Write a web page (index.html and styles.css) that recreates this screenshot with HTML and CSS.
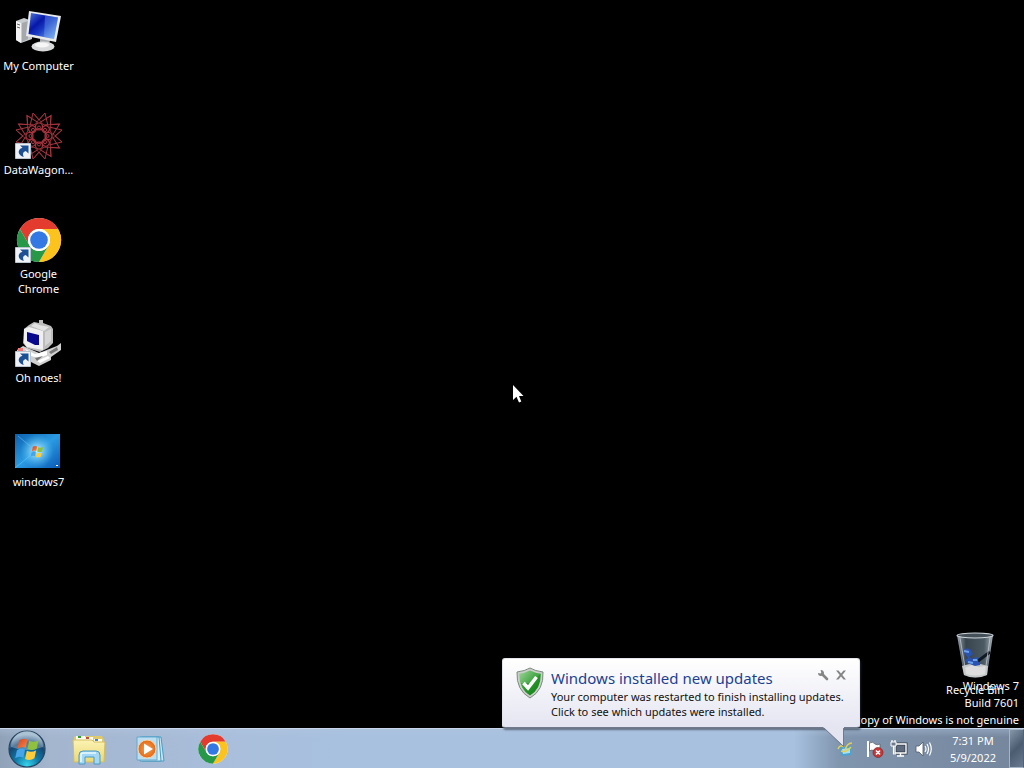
FILE: index.html
```html
<!DOCTYPE html>
<html lang="en">
<head>
<meta charset="utf-8">
<title>Desktop</title>
<link rel="stylesheet" href="styles.css">
</head>
<body>
<svg class="defs" aria-hidden="true">
  <defs>
    <linearGradient id="screen" x1="0" y1="0" x2="1" y2="1"><stop offset="0" stop-color="#4f78dc"/><stop offset=".35" stop-color="#0617a8"/><stop offset=".55" stop-color="#1a3cc4"/><stop offset="1" stop-color="#8fc4fa"/></linearGradient>
    <linearGradient id="wall" x1="0" y1="0" x2="1" y2="1"><stop offset="0" stop-color="#0b5fae"/><stop offset=".5" stop-color="#2b9be2"/><stop offset="1" stop-color="#0a58b4"/></linearGradient>
    <radialGradient id="glow"><stop offset="0" stop-color="#c8f4ff"/><stop offset="1" stop-color="#4fc0f4" stop-opacity="0"/></radialGradient>
    <radialGradient id="orb" cx=".5" cy=".95" r=".85"><stop offset="0" stop-color="#38d4ec"/><stop offset=".4" stop-color="#0f7aa8"/><stop offset=".75" stop-color="#174672"/><stop offset="1" stop-color="#8ba9c4"/></radialGradient>
    <linearGradient id="shield" x1="0" y1="0" x2="1" y2="1"><stop offset="0" stop-color="#8fd08a"/><stop offset=".45" stop-color="#2f9c2f"/><stop offset="1" stop-color="#0c7a12"/></linearGradient>
    <linearGradient id="folder" x1="0" y1="0" x2="0" y2="1"><stop offset="0" stop-color="#fbf3b4"/><stop offset="1" stop-color="#ecd873"/></linearGradient>
    <linearGradient id="bin" x1="0" y1="0" x2="1" y2="0"><stop offset="0" stop-color="#9aa6ae"/><stop offset=".25" stop-color="#38444e"/><stop offset=".75" stop-color="#4c5a64"/><stop offset="1" stop-color="#a6b0b6"/></linearGradient>
    <radialGradient id="orange"><stop offset="0" stop-color="#f9a04c"/><stop offset="1" stop-color="#e36a17"/></radialGradient>
    <linearGradient id="flagRed" x1="0" y1="0" x2="1" y2="1"><stop offset="0" stop-color="#d8401c"/><stop offset="1" stop-color="#f58a4a"/></linearGradient>
    <symbol id="chrome" viewBox="0 0 48 48">
      <circle cx="24" cy="24" r="22" fill="#fff"/>
      <path d="M4.9 13A22 22 0 0 1 43.1 13H24A11 11 0 0 0 14.5 29.5Z" fill="#e33b2e"/>
      <path d="M43.1 13A22 22 0 0 1 24 46L33.5 29.5A11 11 0 0 0 24 13Z" fill="#fcc31e"/>
      <path d="M24 46A22 22 0 0 1 4.9 13L14.5 29.5A11 11 0 0 0 33.5 29.5Z" fill="#279847"/>
      <circle cx="24" cy="24" r="11" fill="#fff"/><circle cx="24" cy="24" r="8.8" fill="#3478e4"/>
    </symbol>
    <symbol id="shortcut" viewBox="0 0 16 16">
      <path d="M.5.5h15v15H.5z" fill="#eef2f6" stroke="#b9c4ce"/>
      <path d="M5 2.5h8.500v8L10.700 8C7.800 9 7.500 11 8.800 14 4.500 13 2 9 5 6c1-.8 1.700-1 2.500-1.200Z" fill="#1d4f94"/>
    </symbol>
    <symbol id="flag" viewBox="0 0 24 24">
      <path d="M4.500 4.500Q8 2 11.500 4L10 11Q6.500 9.200 3 11.500Z" fill="url(#flagRed)"/>
      <path d="M13 5Q17 7 21 4.500L19.500 11.500Q16 14 11.500 12Z" fill="#8fc13e"/>
      <path d="M2.500 13Q6 10.500 9.500 12.500L8 19.500Q4.500 17.500 1 20Z" fill="#46a4e8"/>
      <path d="M11 13.500Q15 15.500 19 13L17.500 20Q13.500 22.500 9.500 20.500Z" fill="#fccc3c"/>
    </symbol>
    <g id="petal" fill="none" stroke="#a83440"><path d="M15 14L18 1L24 8L30 1L33 14" stroke-width="1"/><path d="M18 1L29 13M30 1L19 13" stroke-width=".7"/><circle cx="24" cy="14.500" r="3.500" stroke-width="1.200"/><circle cx="24" cy="15.500" r="1.500" stroke-width="1"/><path d="M20 19Q24 14 28 19" stroke-width=".8"/></g>
  </defs>
</svg>

<main class="desktop">
  <nav class="shortcuts" aria-label="Desktop icons">
    <button class="item">
      <svg class="icon" viewBox="0 0 48 48" aria-hidden="true">
        <path d="M1 13L9 10L17 13V31L6 35L1 32Z" fill="#c9ccce"/><path d="M1 13L6 15V35L1 32Z" fill="#f3f3f3"/><path d="M7 15L13 13V31L7 34Z" fill="#a5a9ac"/><path d="M2 16l3 1M2 19l3 1" stroke="#666"/>
        <path d="M25 30L35 32L34 37H25Z" fill="#a9adb0"/><ellipse cx="28" cy="38.500" rx="11.500" ry="5" fill="#d9dbdc"/><ellipse cx="27" cy="37" rx="7" ry="2.500" fill="#f7f7f7"/>
        <path d="M14 3L46 8L41 34L11 28Z" fill="#e8eaec"/><path d="M16 5L43 9.500L39 31L13.500 26Z" fill="url(#screen)"/><path d="M30 7.500L43 9.500L39 31L29 29Z" fill="#7eb4f5" opacity=".35"/>
      </svg>
      <span class="label">My Computer</span>
    </button>
    <button class="item">
      <svg class="icon" viewBox="0 0 48 48" aria-hidden="true">
        <g><use href="#petal"/><use href="#petal" transform="rotate(45 24 24)"/><use href="#petal" transform="rotate(90 24 24)"/><use href="#petal" transform="rotate(135 24 24)"/><use href="#petal" transform="rotate(180 24 24)"/><use href="#petal" transform="rotate(225 24 24)"/><use href="#petal" transform="rotate(270 24 24)"/><use href="#petal" transform="rotate(315 24 24)"/></g>
        <use href="#shortcut" x="0" y="31" width="16" height="16"/>
      </svg>
      <span class="label">DataWagon...</span>
    </button>
    <button class="item">
      <svg class="icon" viewBox="0 0 48 48" aria-hidden="true"><use href="#chrome" width="48" height="48"/><use href="#shortcut" x="0" y="31" width="16" height="16"/></svg>
      <span class="label">Google<br>Chrome</span>
    </button>
    <button class="item">
      <svg class="icon" viewBox="0 0 48 48" aria-hidden="true">
        <path d="M9 9L14 5L19 2L24 3V0H28V3L36 6L38 9V23L33 28L25 32L12 28L8 23Z" fill="#bcbcbc"/>
        <path d="M9 9L14 7L28 11V30L12 27L9 23Z" fill="#f0f0f0"/><path d="M20 3L24 5L34 7L29 11L16 6Z" fill="#e2e2e2"/>
        <path d="M12 12L24 15V25L20 25L12 21Z" fill="#08088e"/><path d="M30 12L36 9V21L30 26Z" fill="#d5d5d5"/>
        <path d="M2 30L8 26L24 33L42 26L46 23V30L36 37V40L24 46L16 42V36L2 33Z" fill="#d0d0d0"/>
        <path d="M10 29L20 34L32 31V35L24 38L16 36ZM22 41L33 36L35 38L25 43Z" fill="#fff"/><path d="M20 38L28 36L22 41ZM34 32L42 27L43 30L36 34Z" fill="#777"/><path d="M3 28H8V31H3Z" fill="#e77"/>
        <use href="#shortcut" x="0" y="31" width="16" height="16"/>
      </svg>
      <span class="label">Oh noes!</span>
    </button>
    <button class="item">
      <svg class="icon" viewBox="0 0 48 48" aria-hidden="true"><path d="M0 10H45V44H0Z" fill="url(#wall)"/><circle cx="22" cy="27" r="17" fill="url(#glow)"/><path d="M0 44L17 30M3 12L15 22" stroke="#70cdfa" stroke-width="1" opacity=".5"/><use href="#flag" x="15" y="20" width="15" height="15"/><path d="M41 41h2v1h-2z" fill="#fff"/></svg>
      <span class="label">windows7</span>
    </button>
  </nav>

  <svg class="cursor" viewBox="0 0 13 20" aria-hidden="true"><path d="M1 1V16L4.500 12.800L7 18.500L9.300 17.500L7 12H11.500Z" fill="#fff"/></svg>

  <button class="item recycle">
    <svg class="icon" viewBox="0 0 48 48" aria-hidden="true">
      <path d="M6 3H42L36 43Q24 48 13 43Z" fill="url(#bin)"/>
      <path d="M11 34Q24 29 37 34L36 43Q24 48 13 43Z" fill="#c5c8c8"/><path d="M14 36L21 33L28 35L35 34L34 42Q24 45 15 42Z" fill="#ddd"/>
      <path d="M12 19Q15 14 20 18L22 22L18 25L22 27Q25 23 29 27L29 33L24 34L16 31L14 28L17 26Z" fill="#2a52b0"/><path d="M13 19L18 20M22 28L27 28M17 30L22 31" stroke="#6ca2ec" stroke-width="2"/>
      <path d="M27 29L39 20" stroke="#111a22" stroke-width="3"/><path d="M9 6L15 41M39 6L34 41" stroke="#cad3da" stroke-width="1" opacity=".7"/>
      <ellipse cx="24" cy="3.500" rx="18" ry="2.500" fill="#455059" stroke="#cdd5da" stroke-width="1.200"/>
    </svg>
    <span class="label">Recycle Bin</span>
  </button>
  <p class="watermark"><span>Windows 7</span><span>Build 7601</span><span>This copy of Windows is not genuine</span></p>
</main>

<section class="balloon" role="status">
  <svg class="shield" viewBox="0 0 28 32" aria-hidden="true"><path d="M14 1Q19 4 27 5Q28 23 14 31Q0 23 1 5Q9 4 14 1Z" fill="#c9d0c9" stroke="#7d8b7d"/><path d="M14 3.500Q19 6 24.800 6.800Q25 22 14 28.500Q3 22 3.200 6.800Q9 6 14 3.500Z" fill="url(#shield)"/><path d="M14 3.500Q19 6 24.800 6.800L14 16H3.800Q3 11 3.200 6.800Q9 6 14 3.500Z" fill="#fff" opacity=".15"/><path d="M7.500 16L12 21L20.500 10" fill="none" stroke="#fff" stroke-width="3.500"/></svg>
  <div class="message">
    <h1>Windows installed new updates</h1>
    <p>Your computer was restarted to finish installing updates.<br>Click to see which updates were installed.</p>
  </div>
  <div class="tools">
    <button aria-label="Options"><svg viewBox="0 0 12 12"><path d="M5.500 5.500L10 10" stroke="#858585" stroke-width="2.600" stroke-linecap="round"/><path d="M3.500 1A3 3 0 1 1 1 4L3.500 4.500L4.300 3.500Z" fill="#858585"/></svg></button>
    <button aria-label="Close"><svg viewBox="0 0 12 12"><path d="M1 1.500H3.500L6 4.500L8.500 1.500H11L7.300 6L11 10.500H8.500L6 7.500L3.500 10.500H1L4.700 6Z" fill="#858585"/></svg></button>
  </div>
  <svg class="tail" viewBox="0 0 24 21" aria-hidden="true"><path d="M0 0H21V19.500Z" fill="#e4e5f1"/><path d="M1 1L20.500 19.500V1" fill="none" stroke="#70798d"/></svg>
</section>

<footer class="taskbar">
  <button class="start" aria-label="Start"><svg viewBox="0 0 40 40"><circle cx="20" cy="20" r="18" fill="url(#orb)" stroke="#25455f" stroke-width="1.200"/><path d="M4 18A16 16 0 0 1 36 18Q20 24 4 18Z" fill="#fff" opacity=".28"/><use href="#flag" x="7" y="6" width="28" height="28"/></svg></button>
  <nav class="pinned" aria-label="Pinned programs">
    <button aria-label="Windows Explorer"><svg viewBox="0 0 34 32"><path d="M2 4L4 3H30L32 7V28H2Z" fill="#dfc968"/><path d="M4 3h9v4H4zM13 4h8v4h-8zM22 6h8v3h-8z" fill="#fffdf0"/><path d="M6 3h3v2H6z" fill="#349b35"/><path d="M14 4h3v2h-3z" fill="#c64b38"/><path d="M23 6h3v2h-3z" fill="#4386c8"/><path d="M1 7H20L22 9H33L32 29H2Z" fill="url(#folder)" stroke="#d5bd5c"/><path d="M7 31V22Q7 18 11 18H24Q28 18 28 22V31H22V24H13V31Z" fill="#a3d8f4" stroke="#4b9ac4"/><path d="M9 29V22Q9 20 11 20H24" fill="none" stroke="#e9faff" stroke-width="1.500"/></svg></button>
    <button aria-label="Windows Media Player"><svg viewBox="0 0 34 32"><path d="M8 4H27L30 28H8Z" fill="#c4e5f4" stroke="#4a9cc0"/><path d="M6 4H25L27 28H6Z" fill="#d9f0fa" stroke="#4a9cc0"/><path d="M3 4H23V27H3Z" fill="#bbdff2" stroke="#64a8cc"/><circle cx="13" cy="16" r="9" fill="url(#orange)" stroke="#f8d2a8"/><path d="M10 10.500L19 16L10 21.500Z" fill="#fff"/></svg></button>
    <button aria-label="Google Chrome"><svg viewBox="0 0 34 34"><use href="#chrome" width="34" height="34"/></svg></button>
  </nav>
  <div class="tray">
    <button class="update" aria-label="Windows Update"><svg viewBox="0 0 18 18"><path d="M4 7L15 6V15L5 16Z" fill="#4ba3cf"/><path d="M6 9L14 8V13L7 14Z" fill="#a8e0f0"/><path d="M2 9Q4 4 8 7M9 10Q11 3 16 3M5 11Q10 13 15 7" fill="none" stroke="#e7cf52" stroke-width="1.500"/></svg></button>
    <button aria-label="Action Center"><svg viewBox="0 0 18 18"><path d="M2 1V17" stroke="#fff" stroke-width="2"/><path d="M3.500 3Q7 1 9 4Q11 5.500 14 4V12Q10 13 8 11Q6 9 3.500 11Z" fill="#fff" stroke="#505a68" stroke-width=".7"/><circle cx="12" cy="12.500" r="5" fill="#c93636" stroke="#742222" stroke-width=".6"/><path d="M10 10.500L14 14.500M14 10.500L10 14.500" stroke="#fff" stroke-width="1.600"/></svg></button>
    <button aria-label="Network"><svg viewBox="0 0 18 18"><path d="M5 4H16V13H5Z" fill="#5d6b7c" stroke="#35404e" stroke-width="3"/><path d="M5 4H16V13H5ZM10.500 13V16M7 16H14" fill="none" stroke="#fff" stroke-width="1.400"/><path d="M1 2H6V6H1Z" fill="#6d7b8c" stroke="#fff"/><path d="M2 0V2M5 0V2M3.500 6V14H6" fill="none" stroke="#fff" stroke-width="1.200"/></svg></button>
    <button aria-label="Volume"><svg viewBox="0 0 18 18"><path d="M2 6H5L9 2V16L5 12H2Z" fill="#fff" stroke="#515c6a" stroke-width=".8"/><path d="M11 6Q13 9 11 12M13 4Q16 9 13 14M15.500 2.500Q19 9 15.500 15.500" fill="none" stroke="#fff" stroke-width="1.200"/></svg></button>
  </div>
  <button class="clock"><time>7:31 PM</time><time>5/9/2022</time></button>
  <button class="peek" aria-label="Show desktop"></button>
</footer>
</body>
</html>
```

FILE: styles.css
```css
* { box-sizing: border-box; }
body {
  position: relative;
  display: flex;
  flex-direction: column;
  min-height: 100vh;
  margin: 0;
  background: #000;
  color: #fff;
  font: 11px/15px "Noto Sans", "Open Sans", sans-serif;
}
button {
  margin: 0;
  padding: 0;
  border: 0;
  background: none;
  color: inherit;
  font: inherit;
}
svg { display: block; }
h1, p { margin: 0; }
.defs { position: absolute; width: 0; height: 0; }

.desktop { position: relative; flex: 1; }
.shortcuts { display: flex; flex-direction: column; width: 77px; padding-top: 8px; }
.item {
  display: flex;
  flex-direction: column;
  align-items: center;
  gap: 2px;
  height: 104px;
  white-space: nowrap;
}
.icon { width: 48px; height: 48px; }
.label { text-shadow: 0 1px 2px #000; }
.cursor { position: absolute; left: 50%; top: 384px; width: 13px; height: 20px; }
.recycle { position: absolute; right: 12px; bottom: -8px; width: 74px; }
.watermark {
  position: absolute;
  right: 5px;
  bottom: 0;
  display: flex;
  flex-direction: column;
  align-items: flex-end;
  line-height: 17px;
  white-space: nowrap;
}

.balloon {
  position: absolute;
  right: 164px;
  bottom: 40px;
  display: flex;
  align-items: flex-start;
  width: 358px;
  padding: 8px 12px 8px 13px;
  border: 1px solid #e4e5ec;
  border-bottom-color: #70798d;
  border-radius: 3px;
  background: linear-gradient(#fff, #e4e5f1);
  box-shadow: 1px 2px 2px #26313f99;
  color: #111;
}
.shield { flex: none; width: 28px; height: 32px; margin-right: 7px; }
.message { white-space: nowrap; }
.message h1 { color: #1c3f94; font-size: 15px; font-weight: 400; line-height: 22px; }
.tools { position: absolute; top: 10px; right: 12px; display: flex; gap: 6px; }
.tools svg { width: 12px; height: 12px; }
.tail { position: absolute; top: 100%; right: 12px; width: 24px; height: 21px; }

.taskbar {
  display: flex;
  align-items: center;
  height: 40px;
  padding-left: 7px;
  border-top: 1px solid #c8d5ea;
  background:
    linear-gradient(#b3c5de66, #b3c5de00 8px),
    linear-gradient(90deg, #8fa2b8, #a4b5ce 50px, #a9bfdc 240px, #a7c1df 350px, #a7c1df calc(100% - 230px), #8095ae calc(100% - 185px), #75869c);
}
.start svg { width: 40px; height: 40px; }
.pinned { display: flex; align-items: center; gap: 28px; margin-left: 25px; }
.pinned svg { width: 34px; height: 32px; }
.tray { display: flex; align-items: center; gap: 6px; margin-left: auto; }
.tray svg { width: 18px; height: 18px; }
.update { margin-right: 6px; }
.clock { display: flex; flex-direction: column; align-items: center; width: 72px; margin-left: 5px; line-height: 17px; }
.peek {
  align-self: stretch;
  width: 15px;
  border: 1px solid #a5b4c6;
  border-right-color: #526176;
  background: linear-gradient(135deg, #8797aa, #4b5b70 50%, #6a7b91);
}
```
